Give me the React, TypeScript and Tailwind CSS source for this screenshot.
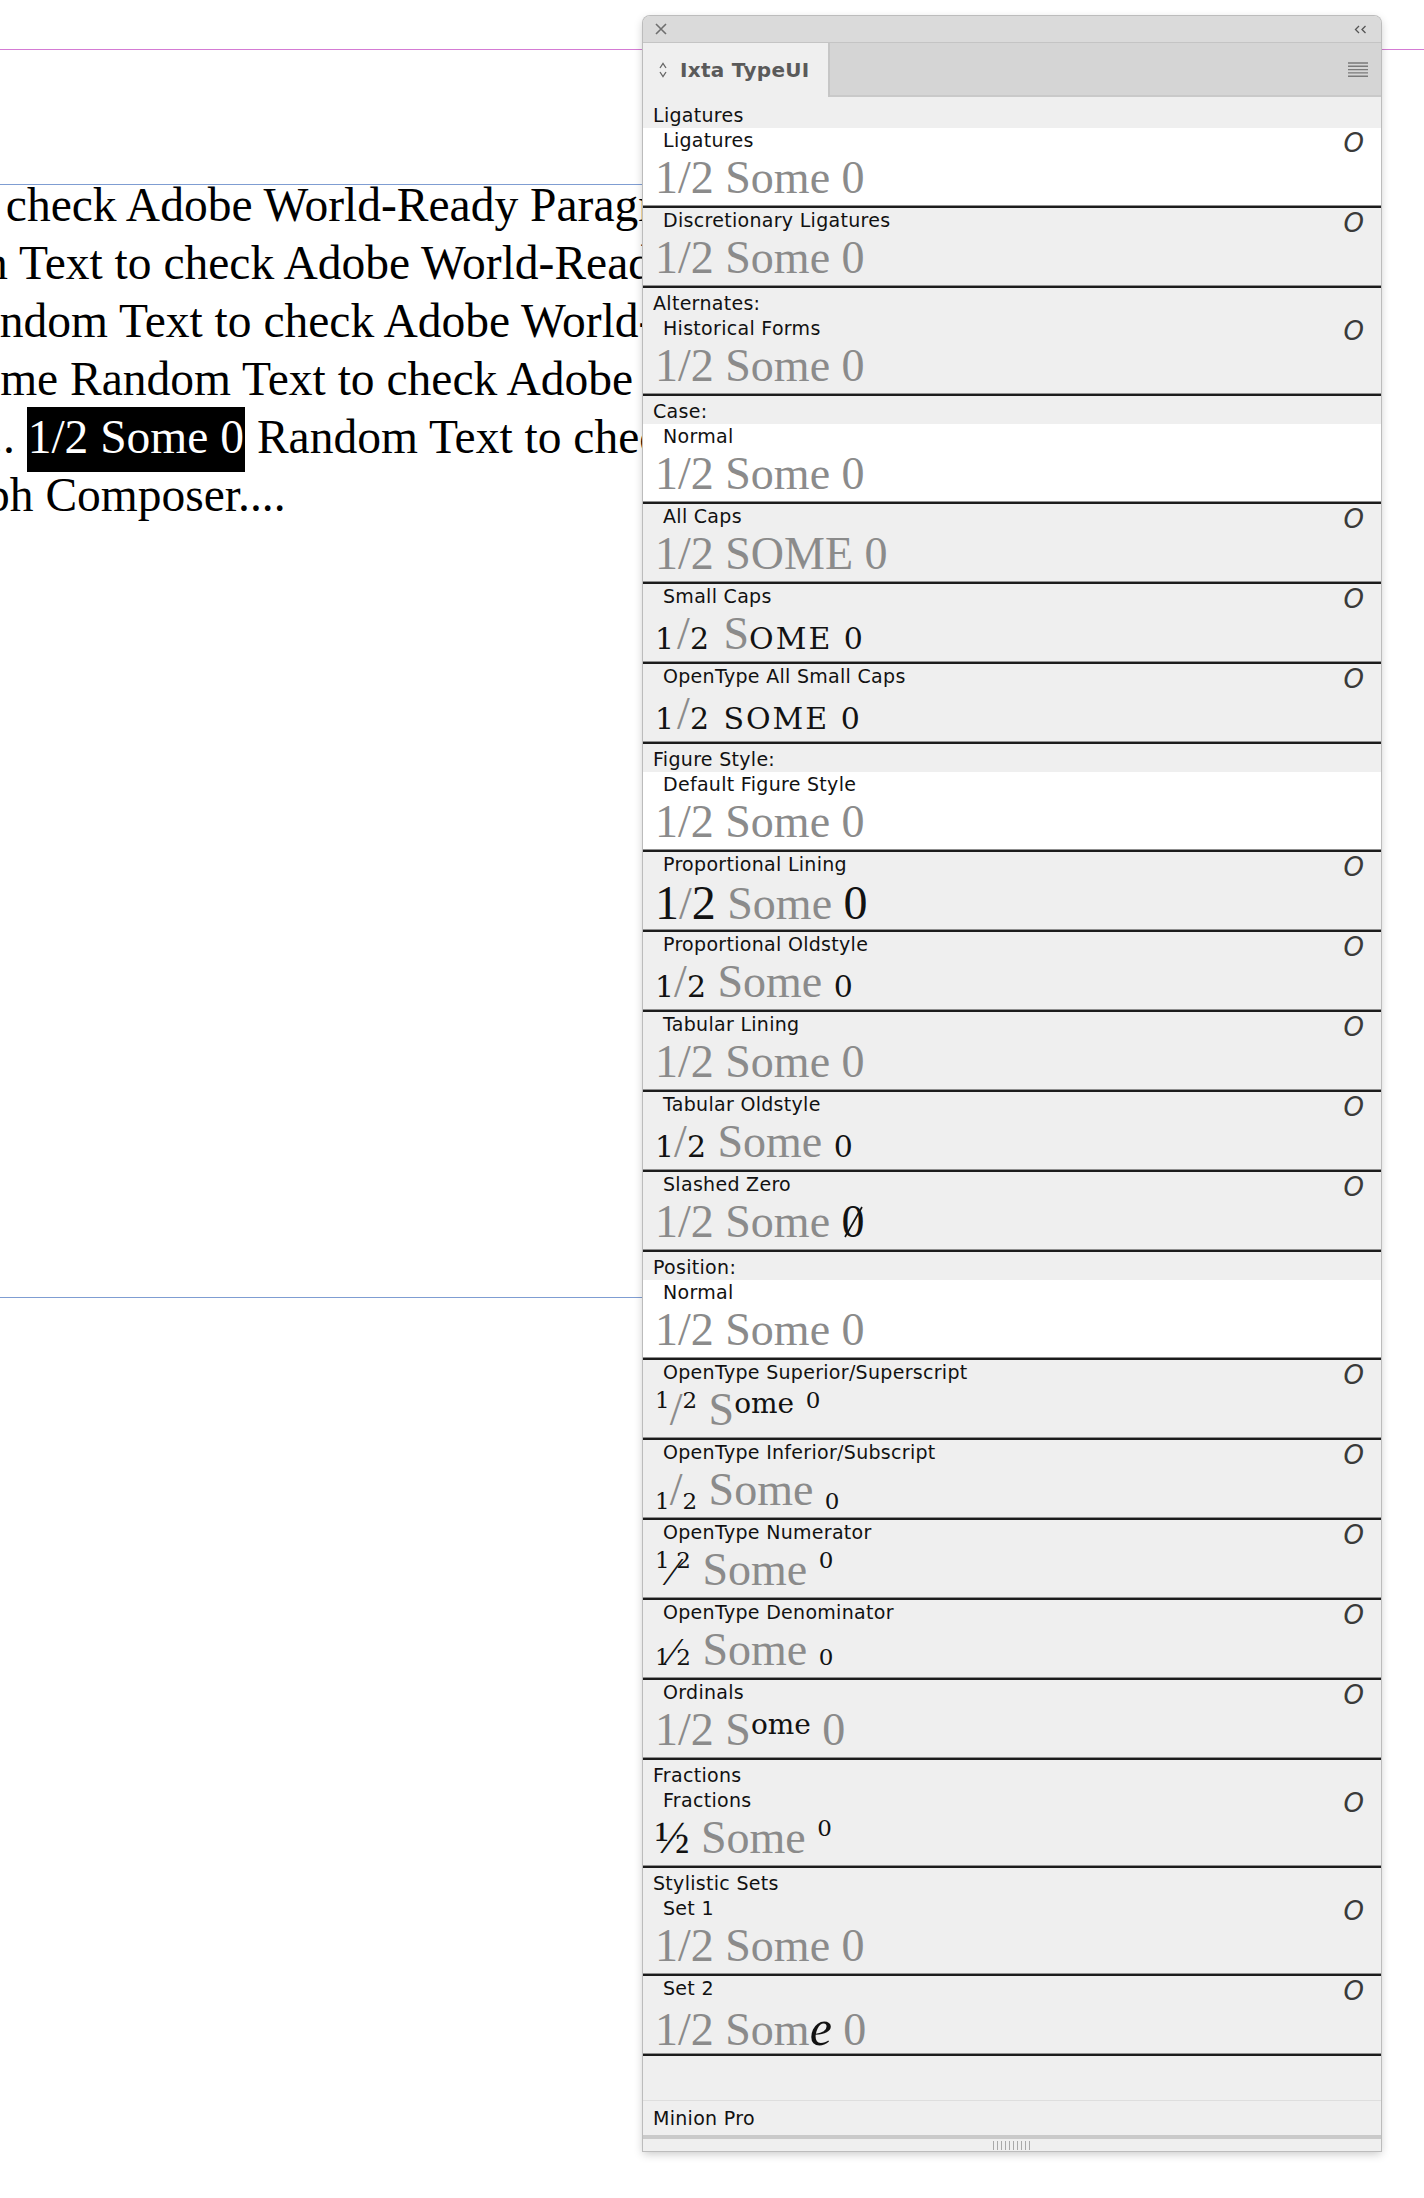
import type { ReactNode } from "react";

const G = "text-[#8b8b8b]";
const K = "text-[#121212]";
const DV = "font-['DejaVu_Serif',serif]";

type Row = { label: string; white?: boolean; noIcon?: boolean; sample: ReactNode };
type Group = { title: string; rows: Row[] };

function Small({ children }: { children: ReactNode }) {
  return <span className={`${K} ${DV} text-[30px] leading-none`}>{children}</span>;
}

function CapFig({ children }: { children: ReactNode }) {
  return <span className={`${K} ${DV} text-[30px] leading-none tracking-[3px]`}>{children}</span>;
}

function Caps({ children }: { children: ReactNode }) {
  return <span className={`${K} ${DV} text-[30px] leading-none tracking-[2px]`}>{children}</span>;
}

function Sup({ children }: { children: ReactNode }) {
  return <span className={`${K} ${DV} relative -top-[17px] text-[23px] leading-none`}>{children}</span>;
}

function Sub({ children }: { children: ReactNode }) {
  return <span className={`${K} ${DV} relative top-[4px] text-[23px] leading-none`}>{children}</span>;
}

function Den({ children }: { children: ReactNode }) {
  return <span className={`${K} ${DV} text-[23px] leading-none`}>{children}</span>;
}

function Raised({ children }: { children: ReactNode }) {
  return <span className={`${K} ${DV} relative -top-[12px] text-[28px] leading-none`}>{children}</span>;
}

const plain = <span className={G}>1/2 Some 0</span>;

const oldstyle = (
  <>
    <Small>1</Small>
    <span className={G}>/</span>
    <Small>2</Small>
    <span className={G}> Some </span>
    <Small>0</Small>
  </>
);

const groups: Group[] = [
  {
    title: "Ligatures",
    rows: [
      { label: "Ligatures", white: true, sample: plain },
      { label: "Discretionary Ligatures", sample: plain },
    ],
  },
  {
    title: "Alternates:",
    rows: [{ label: "Historical Forms", sample: plain }],
  },
  {
    title: "Case:",
    rows: [
      { label: "Normal", white: true, noIcon: true, sample: plain },
      { label: "All Caps", sample: <span className={G}>1/2 SOME 0</span> },
      {
        label: "Small Caps",
        sample: (
          <>
            <CapFig>1</CapFig>
            <span className={G}>/</span>
            <CapFig>2</CapFig> <span className={G}>S</span>
            <Caps>OME</Caps> <Small>0</Small>
          </>
        ),
      },
      {
        label: "OpenType All Small Caps",
        sample: (
          <>
            <CapFig>1</CapFig>
            <span className={G}>/</span>
            <CapFig>2</CapFig> <Caps>SOME</Caps> <Small>0</Small>
          </>
        ),
      },
    ],
  },
  {
    title: "Figure Style:",
    rows: [
      { label: "Default Figure Style", white: true, noIcon: true, sample: plain },
      {
        label: "Proportional Lining",
        sample: (
          <>
            <span className={`${K} text-[48px] leading-none`}>1</span>
            <span className={G}>/</span>
            <span className={`${K} text-[48px] leading-none`}>2</span>
            <span className={G}> Some </span>
            <span className={`${K} text-[48px] leading-none`}>0</span>
          </>
        ),
      },
      { label: "Proportional Oldstyle", sample: oldstyle },
      { label: "Tabular Lining", sample: plain },
      { label: "Tabular Oldstyle", sample: oldstyle },
      {
        label: "Slashed Zero",
        sample: (
          <>
            <span className={G}>1/2 Some </span>
            <span className={`${K} relative`}>
              0
              <svg className="absolute left-0 top-[10px] w-full h-[32px]" viewBox="0 0 23 32" fill="none">
                <line x1="3" y1="31" x2="20" y2="1" stroke="#121212" strokeWidth="1.6" />
              </svg>
            </span>
          </>
        ),
      },
    ],
  },
  {
    title: "Position:",
    rows: [
      { label: "Normal", white: true, noIcon: true, sample: plain },
      {
        label: "OpenType Superior/Superscript",
        sample: (
          <>
            <Sup>1</Sup>
            <span className={G}>/</span>
            <Sup>2</Sup> <span className={G}>S</span>
            <Raised>ome</Raised> <Sup>0</Sup>
          </>
        ),
      },
      {
        label: "OpenType Inferior/Subscript",
        sample: (
          <>
            <Sub>1</Sub>
            <span className={G}>/</span>
            <Sub>2</Sub> <span className={G}>Some</span> <Sub>0</Sub>
          </>
        ),
      },
      {
        label: "OpenType Numerator",
        sample: (
          <>
            <Sup>1</Sup>
            <span className={`${K} text-[40px] leading-none`}>⁄</span>
            <Sup>2</Sup> <span className={G}>Some</span> <Sup>0</Sup>
          </>
        ),
      },
      {
        label: "OpenType Denominator",
        sample: (
          <>
            <Den>1</Den>
            <span className={`${K} text-[40px] leading-none`}>⁄</span>
            <Den>2</Den> <span className={G}>Some</span> <Den>0</Den>
          </>
        ),
      },
      {
        label: "Ordinals",
        sample: (
          <>
            <span className={G}>1/2 S</span>
            <span className={`${K} ${DV} relative -top-[11px] text-[28px] leading-none`}>ome</span>
            <span className={G}> 0</span>
          </>
        ),
      },
    ],
  },
  {
    title: "Fractions",
    rows: [
      {
        label: "Fractions",
        sample: (
          <>
            <span className={K}>½</span> <span className={G}>Some</span> <Sup>0</Sup>
          </>
        ),
      },
    ],
  },
  {
    title: "Stylistic Sets",
    rows: [
      { label: "Set 1", sample: plain },
      {
        label: "Set 2",
        sample: (
          <>
            <span className={G}>1/2 Som</span>
            <span className={`${K} italic text-[50px] leading-none`}>e</span>
            <span className={G}> 0</span>
          </>
        ),
      },
    ],
  },
];

function FeatureRow({ row }: { row: Row }) {
  return (
    <div className={row.white ? "bg-white" : "bg-[#efefef]"}>
      <div className="h-[77px] overflow-hidden">
        <div className="h-[22px] mt-[1px] flex justify-between pl-[20px] pr-[17px]">
          <span className="text-[19px] leading-[22px] tracking-[0.3px] text-[#111]">{row.label}</span>
          {!row.noIcon && (
            <span className="mt-[3px] text-[26px] leading-[22px] italic text-[#3a3a3a]">O</span>
          )}
        </div>
        <div className="mt-[4px] pl-[12px] font-['Liberation_Serif',serif] text-[46px] leading-[46px] whitespace-nowrap">
          {row.sample}
        </div>
      </div>
      <div className="h-px bg-[#8f8f8f]" />
      <div className="h-[2px] bg-[#1c1c1c]" />
    </div>
  );
}

function Panel() {
  return (
    <div className="absolute left-[643px] top-[16px] w-[738px] flex flex-col rounded-t-[7px] bg-[#efefef] ring-1 ring-[#bcbcbc] shadow-[0_3px_10px_rgba(0,0,0,0.22)] overflow-hidden font-['DejaVu_Sans',sans-serif]">
      <div className="h-[26px] flex items-center justify-between pl-[12px] pr-[14px] bg-[#dadada]">
        <svg width="12" height="12" viewBox="0 0 12 12" fill="none">
          <path d="M1 1L11 11M11 1L1 11" stroke="#6f6f6f" strokeWidth="1.6" />
        </svg>
        <svg width="13" height="9" viewBox="0 0 13 9" fill="none">
          <path d="M5 1L1.5 4.5L5 8M11.5 1L8 4.5L11.5 8" stroke="#555" strokeWidth="1.3" />
        </svg>
      </div>
      <div className="h-px bg-[#c4c4c4]" />
      <div className="h-[54px] flex bg-[#d5d5d5]">
        <div className="w-[185px] flex items-center gap-[13px] pl-[16px] bg-[#efefef]">
          <svg width="8" height="16" viewBox="0 0 8 16" fill="none">
            <path d="M1 6L4 1.5L7 6M1 10L4 14.5L7 10" stroke="#666" strokeWidth="1.3" />
          </svg>
          <span className="text-[20px] font-bold tracking-[0.3px] text-[#5a5a5a] leading-none">Ixta TypeUI</span>
        </div>
        <div className="w-[2px] bg-[#c6c6c6]" />
        <div className="flex-1 flex flex-col">
          <div className="flex-1 flex items-center justify-end pr-[13px]">
            <svg width="20" height="15" viewBox="0 0 20 15" fill="none">
              <path d="M0 1H20M0 4.3H20M0 7.6H20M0 10.9H20M0 14.2H20" stroke="#7a7a7a" strokeWidth="1.4" />
            </svg>
          </div>
          <div className="h-[2px] bg-[#c9c9c9]" />
        </div>
      </div>
      {groups.map((group, i) => (
        <div key={group.title}>
          <div className={`${i === 0 ? "h-[31px]" : "h-[28px]"} flex items-end pl-[10px]`}>
            <span className="mb-[2px] text-[19px] leading-[22px] tracking-[0.3px] text-[#111]">{group.title}</span>
          </div>
          {group.rows.map((row) => (
            <FeatureRow key={group.title + row.label} row={row} />
          ))}
        </div>
      ))}
      <div className="h-[44px]" />
      <div className="h-px bg-[#dedede]" />
      <div className="h-[34px] flex items-center pl-[10px] text-[19px] tracking-[0.3px] text-[#111]">Minion Pro</div>
      <div className="h-[4px] bg-[#cacaca]" />
      <div className="h-[12px] flex items-center justify-center">
        <svg width="38" height="9" viewBox="0 0 38 9" fill="none">
          {[0, 1, 2, 3, 4, 5, 6, 7, 8, 9].map((n) => (
            <line key={n} x1={n * 4 + 0.5} y1="0" x2={n * 4 + 0.5} y2="9" stroke="#a9a9a9" strokeWidth="1" />
          ))}
        </svg>
      </div>
    </div>
  );
}

export default function App() {
  return (
    <div className="relative w-[1424px] h-[2198px] bg-white overflow-hidden">
      <div className="h-[49px]" />
      <div className="h-px bg-[#d47bd4]" />
      <div className="h-[134px]" />
      <div className="w-[1000px] h-px bg-[#7f9dd2]" />
      <div className="w-[1000px] h-[1120px] overflow-x-clip">
        <div className="-mt-[8px] font-['Liberation_Serif',serif] text-[47.5px] leading-[57.9px] text-black">
          <div className="-ml-[43px] whitespace-nowrap">to check Adobe World-Ready Paragraph Composer....</div>
          <div className="-ml-[153px] whitespace-nowrap">Random Text to check Adobe World-Ready Paragraph</div>
          <div className="-ml-[53px] whitespace-nowrap">Random Text to check Adobe World-Ready Paragraph</div>
          <div className="-ml-[50px] whitespace-nowrap">Some Random Text to check Adobe World-Ready</div>
          <div className="-ml-[9px] whitespace-nowrap">
            .. <span className="bg-black text-white px-px pt-[4px] pb-[9px]">1/2 Some 0</span> Random Text to
            check Adobe World-Ready
          </div>
          <div className="-ml-[159px] whitespace-nowrap">Paragraph Composer....</div>
        </div>
      </div>
      <div className="w-[1000px] h-px bg-[#7f9dd2]" />
      <Panel />
    </div>
  );
}
